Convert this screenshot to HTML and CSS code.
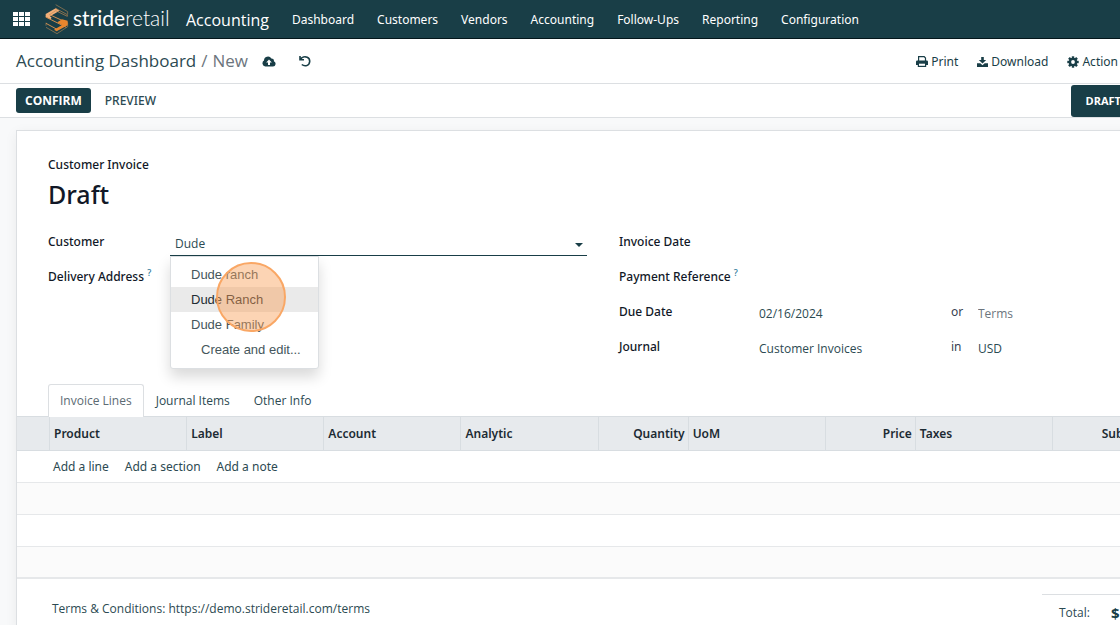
FILE: index.html
```html
<!DOCTYPE html>
<html lang="en">
<head>
<meta charset="utf-8">
<meta name="viewport" content="width=device-width, initial-scale=1">
<title>Accounting - New Invoice</title>
<link rel="stylesheet" href="styles.css">
</head>
<body>
<div class="app">
  <header class="navbar">
    <button class="apps" type="button" aria-label="Applications">
      <svg width="18" height="14" viewBox="0 0 18 14" fill="#fff"><path d="M0 0h5v4H0zM6 0h5v4H6zM12 0h5v4h-5zM0 5h5v4H0zM6 5h5v4H6zM12 5h5v4h-5zM0 10h5v4H0zM6 10h5v4H6zM12 10h5v4h-5z"/></svg>
    </button>
    <a class="logo" href="#">
      <svg width="24" height="31" viewBox="136 13 72 93" fill="none">
        <path d="M168 15l36 21v8M139 69v9M172 102l-33-19M204 69v12l-32 21" stroke="#a98355" stroke-width="2"/>
        <path d="M138 43l30-17 12 7-29 17 5 4-4 5-14-7z" fill="#f2b07a"/>
        <path d="M168 26l35 19v5l-35-17-20 13" stroke="#c08a52" stroke-width="2"/>
        <path d="M138 52l62 31M152 46l52 24M139 71l33 18 14-8" stroke="#d08f50" stroke-width="3"/>
        <path d="M204 63v14l-33 18-8-5 24-14-14-8 14-9z" fill="#e8862e"/>
      </svg>
      <span class="logo-text"><b>stride</b>retail</span>
    </a>
    <a class="brand" href="#">Accounting</a>
    <nav class="menu">
      <a href="#">Dashboard</a>
      <a href="#">Customers</a>
      <a href="#">Vendors</a>
      <a href="#">Accounting</a>
      <a href="#">Follow-Ups</a>
      <a href="#">Reporting</a>
      <a href="#">Configuration</a>
    </nav>
  </header>

  <div class="control-panel">
    <div class="breadcrumb">
      <a href="#">Accounting Dashboard</a>
      <span class="muted">/</span>
      <span class="muted">New</span>
    </div>
    <button class="icon-button" type="button" aria-label="Save">
      <svg width="14" height="11" viewBox="0 0 14 11"><path fill="#193e47" d="M3.300 10.500A3.200 3.200 0 0 1 2 4.600 4 4 0 0 1 9.400 2.400a2.500 2.500 0 0 1 2.500 2.900 2.700 2.700 0 0 1-.9 5.200z"/><path fill="#fff" d="M7 3.500L4.200 6.500H6V9h2V6.500h1.800z"/></svg>
    </button>
    <button class="icon-button" type="button" aria-label="Discard">
      <svg width="12" height="12" viewBox="0 0 12 12" fill="none" stroke="#193e47" stroke-width="1.600"><path d="M1 1v3.800h4M1.400 4.500C3 1.800 6 1.200 8.200 2.200c3.600 1.700 3.200 7-.4 8.300-1.800.6-3.600.2-5-1"/></svg>
    </button>
    <div class="actions">
      <button type="button">
        <svg width="12" height="11" viewBox="0 0 12 11"><path fill="none" stroke="#193e47" stroke-width="1.200" d="M2.600 5V.7h5.600l1.300 1.400V5"/><path fill="#193e47" d="M1.200 4.500h9.600Q12 4.500 12 5.700V9h-1.800v2H1.800V9H0V5.700Q0 4.500 1.200 4.500z"/><path fill="#fff" d="M3 7.700h6v2.100H3z"/></svg>
        Print
      </button>
      <button type="button">
        <svg width="11" height="10" viewBox="0 0 11 10" fill="#193e47"><path d="M4.200 0h2.600v3h2.400L5.500 6.600 1.800 3h2.400z"/><path d="M0 6.200h3.300l2.200 2 2.200-2H11V10H0z"/></svg>
        Download
      </button>
      <button type="button">
        <svg width="12" height="12" viewBox="-6 -6 12 12"><g fill="#193e47"><circle r="4.300"/><path d="M-1.200-5.700h2.400v11.400h-2.400z"/><path d="M-1.200-5.700h2.400v11.400h-2.400z" transform="rotate(45)"/><path d="M-1.200-5.700h2.400v11.400h-2.400z" transform="rotate(90)"/><path d="M-1.200-5.700h2.400v11.400h-2.400z" transform="rotate(135)"/></g><circle r="1.900" fill="#fff"/></svg>
        Action
      </button>
    </div>
  </div>

  <div class="statusbar">
    <button class="confirm" type="button">CONFIRM</button>
    <button class="preview" type="button">PREVIEW</button>
    <button class="stage" type="button">DRAFT</button>
  </div>

  <main class="sheet">
    <div class="title">
      <p>Customer Invoice</p>
      <h1>Draft</h1>
    </div>

    <form class="fields">
      <div class="group">
        <div class="row">
          <label for="customer">Customer</label>
          <div class="combo">
            <input id="customer" type="text" value="Dude" autocomplete="off">
            <svg class="caret" width="8" height="4" viewBox="0 0 8 4"><path fill="#193e47" d="M0 0h8L4 4z"/></svg>
            <ul class="options">
              <li><button type="button">Dude ranch</button></li>
              <li><button class="active" type="button">Dude Ranch</button></li>
              <li><button type="button">Dude Family</button></li>
              <li><button class="create" type="button">Create and edit...</button></li>
            </ul>
            <span class="click-mark"></span>
          </div>
        </div>
        <div class="row">
          <label for="delivery">Delivery Address <sup>?</sup></label>
          <input id="delivery" type="text">
        </div>
      </div>
      <div class="group group-right">
        <div class="row">
          <label for="invoice-date">Invoice Date</label>
          <input id="invoice-date" type="text">
        </div>
        <div class="row">
          <label for="reference">Payment Reference <sup>?</sup></label>
          <input id="reference" type="text">
        </div>
        <div class="row">
          <label for="due">Due Date</label>
          <input id="due" type="text" value="02/16/2024">
          <label class="joiner" for="terms">or</label>
          <input class="short" id="terms" type="text" placeholder="Terms">
        </div>
        <div class="row">
          <label for="journal">Journal</label>
          <input id="journal" type="text" value="Customer Invoices">
          <label class="joiner" for="currency">in</label>
          <input class="short" id="currency" type="text" value="USD">
        </div>
      </div>
    </form>

    <div class="tabs" role="tablist">
      <button class="tab selected" type="button" role="tab" aria-selected="true">Invoice Lines</button>
      <button class="tab" type="button" role="tab">Journal Items</button>
      <button class="tab" type="button" role="tab">Other Info</button>
    </div>

    <table class="lines">
      <colgroup>
        <col class="handle"><col><col><col><col><col class="narrow"><col><col class="narrow"><col><col class="subtotal">
      </colgroup>
      <thead>
        <tr><th></th><th>Product</th><th>Label</th><th>Account</th><th>Analytic</th><th class="number">Quantity</th><th>UoM</th><th class="number">Price</th><th>Taxes</th><th class="number">Subtotal</th></tr>
      </thead>
      <tbody>
        <tr><td></td><td colspan="9"><div class="adders"><a href="#">Add a line</a><a href="#">Add a section</a><a href="#">Add a note</a></div></td></tr>
        <tr><td colspan="10"></td></tr>
        <tr><td colspan="10"></td></tr>
        <tr><td colspan="10"></td></tr>
      </tbody>
    </table>

    <footer class="summary">
      <p class="terms">Terms &amp; Conditions: https://demo.strideretail.com/terms</p>
      <div class="total"><span>Total:</span><strong>$ 0.00</strong></div>
    </footer>
  </main>
</div>
</body>
</html>
```
FILE: styles.css
```css
* {
  box-sizing: border-box;
}

body {
  margin: 0;
  overflow: hidden;
  background: #f8f9fa;
  color: #2c4a52;
  font-family: "Open Sans", "Noto Sans", sans-serif;
  font-size: 12px;
  line-height: 20px;
}

a {
  color: inherit;
  text-decoration: none;
}

button,
input {
  margin: 0;
  padding: 0;
  border: 0;
  background: none;
  color: inherit;
  font: inherit;
}

svg {
  display: block;
  flex: none;
}

/* Parts set in the sturdier face */
.navbar,
.actions,
.preview,
.title,
.row label,
.lines {
  font-family: "Noto Sans", "Open Sans", sans-serif;
}

/* The form is wider than the viewport and runs past its right edge. */
.app {
  display: flex;
  flex-direction: column;
  width: calc(100% + 40px);
  height: 100vh;
}

/* Navigation bar */
.navbar {
  display: flex;
  flex: none;
  align-items: center;
  height: 39px;
  padding-left: 13px;
  border-bottom: 1px solid #04161b;
  background: #193e47;
  color: #fff;
  white-space: nowrap;
}

.logo {
  display: flex;
  align-items: center;
  gap: 4px;
  margin-left: 14px;
}

.logo-text {
  width: 97px;
  padding-bottom: 2px;
  font-family: Lato, sans-serif;
  font-size: 21px;
  font-weight: 300;
  line-height: 24px;
}

.brand {
  padding-top: 2px;
  margin-left: 16px;
  font-family: "Open Sans", "Noto Sans", sans-serif;
  font-size: 16px;
}

.menu {
  display: flex;
  gap: 23px;
  margin-left: 23px;
  padding-top: 2px;
}

/* Control panel */
.control-panel {
  display: flex;
  flex: none;
  align-items: center;
  height: 45px;
  padding: 0 42px 0 16px;
  border-bottom: 1px solid #dcdfe2;
  background: #fff;
}

.breadcrumb {
  display: flex;
  gap: 5px;
  font-size: 17px;
}

.muted {
  color: #6c757d;
}

.icon-button {
  margin-left: 14px;
}

.icon-button + .icon-button {
  margin-left: 23px;
}

.actions {
  display: flex;
  gap: 19px;
  margin-left: auto;
  padding-top: 1px;
  color: #193e47;
}

.actions button {
  display: flex;
  align-items: center;
  gap: 3px;
}

/* Status bar */
.statusbar {
  display: flex;
  flex: none;
  align-items: center;
  height: 34px;
  padding-left: 16px;
  border-bottom: 1px solid #dcdfe2;
  background: #fff;
}

.confirm {
  height: 25px;
  padding: 0 9px;
  border-radius: 3px;
  background: #193e47;
  color: #fff;
  font-weight: 700;
}

.preview {
  margin-left: 14px;
  font-weight: 500;
}

.stage {
  height: 32px;
  margin-left: auto;
  margin-right: 14px;
  padding: 0 25px 0 15px;
  border-radius: 3px;
  background: #193e47;
  color: #fff;
  font-size: 11px;
  font-weight: 700;
}

/* Form sheet */
.sheet {
  flex: 1;
  margin: 12px 0 0 16px;
  border: 1px solid #dcdfe2;
  border-bottom: 0;
  background: #fff;
  box-shadow: 0 3px 12px rgba(0, 0, 0, 0.06);
}

.title {
  padding: 24px 31px 0;
  color: #111827;
  font-weight: 500;
}

.title p {
  margin: 0;
}

.title h1 {
  margin: 0;
  font-size: 25px;
  font-weight: 500;
  line-height: 38px;
}

.fields {
  display: flex;
  gap: 32px;
  padding: 12px 31px 0;
}

.group {
  flex: none;
  width: 539px;
}

.group-right {
  flex: 1;
  min-width: 0;
}

.row {
  display: flex;
  height: 35px;
}

.row label {
  flex: none;
  width: 122px;
  padding-top: 7px;
  color: #111827;
  font-weight: 500;
  white-space: nowrap;
}

.row sup {
  color: #2b7a9b;
  font-size: 9px;
  line-height: 1;
}

.row input {
  flex: none;
  width: 192px;
  height: 26px;
  margin-top: 5px;
  outline: 0;
}

.row .short {
  width: 120px;
}

.row input::placeholder {
  color: #6c757d;
  opacity: 1;
}

.group-right .row label {
  width: 140px;
}

.group-right .row .joiner {
  width: 27px;
  color: #374151;
  font-weight: 400;
}

.combo {
  position: relative;
  flex: 1;
}

.row .combo input {
  width: 100%;
  padding: 2px 0 0 5px;
  border-bottom: 1px solid #193e47;
}

.caret {
  position: absolute;
  top: 18px;
  right: 4px;
}

.options {
  position: absolute;
  top: 31px;
  left: 0;
  z-index: 1;
  width: 149px;
  margin: 0;
  padding: 5px 0 6px;
  border: 1px solid #dcdfe2;
  border-radius: 0 0 3px 3px;
  background: #fff;
  box-shadow: 0 8px 14px rgba(0, 0, 0, 0.15);
  color: #45565c;
  font-family: "Liberation Sans", Arial, sans-serif;
  font-size: 13px;
  list-style: none;
}

.options button {
  display: block;
  width: 100%;
  height: 25px;
  padding: 0 20px;
  text-align: left;
  white-space: nowrap;
}

.options .active {
  background: #eaeaea;
  color: #1f2d33;
}

.options .create {
  padding: 0 0 0 30px;
}

/* Ring drawn over the clicked option */
.click-mark {
  position: absolute;
  top: 37px;
  left: 46px;
  z-index: 2;
  width: 70px;
  height: 70px;
  border: 2px solid #f9a765;
  border-radius: 50%;
  background: rgba(249, 160, 88, 0.45);
  pointer-events: none;
}

/* Notebook */
.tabs {
  display: flex;
  margin-top: 19px;
  padding-left: 31px;
}

.tab {
  height: 33px;
  margin-bottom: -1px;
  padding: 0 12px;
}

.selected {
  position: relative;
  padding: 0 11px;
  border: 1px solid #dcdfe2;
  border-bottom: 0;
  border-radius: 3px 3px 0 0;
  background: #fff;
  color: #5c6b73;
}

.lines {
  width: 100%;
  border-collapse: separate;
  border-spacing: 0;
  table-layout: fixed;
}

.handle {
  width: 32px;
}

.narrow {
  width: 90px;
}

.subtotal {
  width: 107px;
}

.lines th {
  height: 35px;
  padding: 1px 4px 0;
  border: solid #d8dde1;
  border-width: 1px 0 1px 1px;
  background: #e7eaed;
  color: #1c2b33;
  font-weight: 600;
  text-align: left;
}

.lines th:first-child {
  border-left: 0;
}

.lines .number {
  padding-right: 3px;
  text-align: right;
}

.lines .number:last-child {
  padding-right: 8px;
}

.lines td {
  height: 32px;
  padding: 1px 4px 0;
  border-bottom: 1px solid #e6e8ea;
}

.lines tr:nth-child(even) td {
  background: #fbfbfb;
}

.lines tbody tr:last-child td {
  border-bottom-width: 2px;
}

.adders {
  display: flex;
  gap: 16px;
}

.summary {
  display: flex;
  justify-content: space-between;
  padding: 15px 0 0 35px;
}

.terms {
  margin: 5px 0 0;
}

.total {
  display: flex;
  gap: 21px;
  align-items: center;
  width: 117px;
  height: 36px;
  padding-left: 17px;
  border-top: 1px solid #dcdfe2;
  white-space: nowrap;
}

.total strong {
  color: #193e47;
  font-size: 15px;
}
```
